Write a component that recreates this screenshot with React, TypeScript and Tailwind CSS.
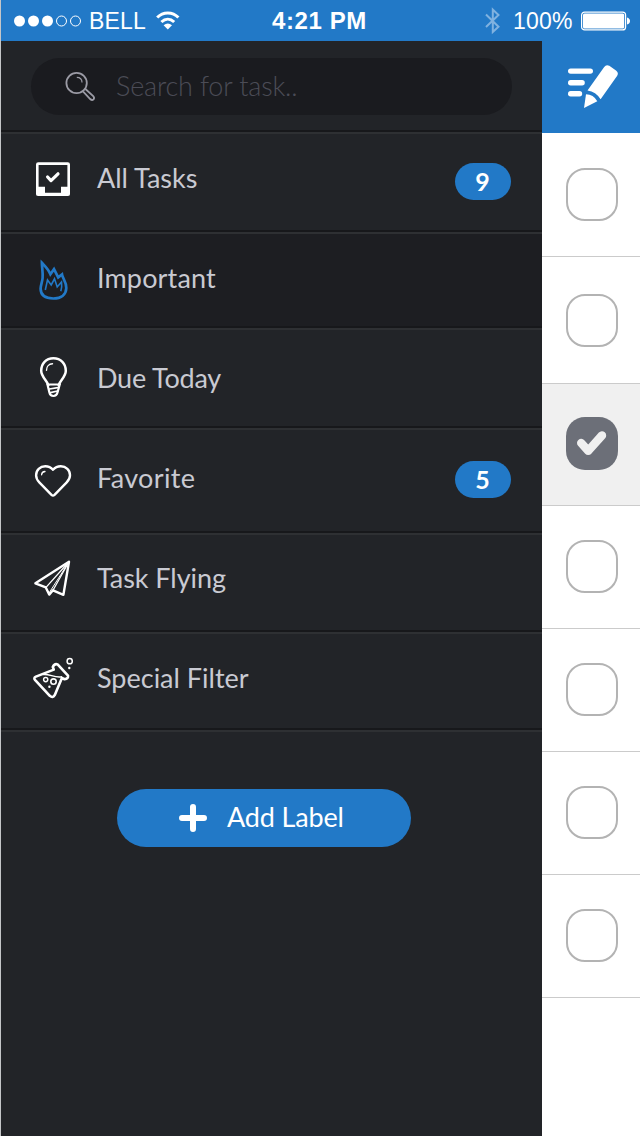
import type { ReactNode } from "react"

function InboxIcon() {
  return (
    <svg className="w-12 h-12" viewBox="0 0 48 48" fill="none" stroke="#fff">
      <rect x="8.3" y="9.6" width="31.4" height="31.2" rx="1" strokeWidth="2.6" />
      <path d="M7.5 32.8h8.5v6h16v-6h8.5v8.4h-33z" fill="#fff" stroke="none" />
      <path d="M18.6 23l3.4 3.6 7-6.8" strokeWidth="3.2" strokeLinecap="round" strokeLinejoin="round" />
    </svg>
  )
}

function FlameIcon() {
  return (
    <svg className="w-12 h-12" viewBox="0 0 48 48" fill="none" stroke="#2279c7">
      <path
        d="M12.9 8.8C16 12 19.2 15 21.4 20.2L25 15.2L29.2 23.4L33 20.4C33.6 24.5 37.4 27.5 37.3 34C37.1 41 31.8 44.5 24.4 44.5C16.5 44.5 11.7 41.5 11.6 34.8C11.6 31.5 13.3 28 13.6 24C14 18 12.9 13 12.9 8.8z"
        strokeWidth="2.7"
      />
      <path d="M16.3 36L18.5 26L22.2 31L25.5 24.8L28.2 33L32.5 28C32.8 31 33.3 33.5 31.8 37.2" strokeWidth="1.6" />
    </svg>
  )
}

function BulbIcon() {
  return (
    <svg className="w-12 h-12" viewBox="0 0 48 48" fill="none" stroke="#fff" strokeLinecap="round">
      <path d="M19.4 31.2C18 26.5 12.2 22.8 12.2 16.8C12.2 9.5 17 4.3 24.4 4.3S36.8 9.5 36.8 16.8C36.8 22.8 31 26.5 29.6 31.2" strokeWidth="2.5" />
      <path d="M18.5 30.5h12.2L28.5 38.5Q27.5 42 24.5 42Q21.2 42 20.4 38.5z" strokeWidth="2.2" />
      <path d="M20.5 35l8.2-1.4M21.5 38.6l7-1.6" strokeWidth="1.7" />
      <path d="M17.5 16.2C17.5 12.5 20 10 23.5 9.8" strokeWidth="1.4" />
    </svg>
  )
}

function HeartIcon() {
  return (
    <svg className="w-12 h-12" viewBox="0 0 48 48" fill="none" stroke="#fff" strokeLinejoin="round" strokeLinecap="round">
      <path
        d="M24 15.8C22 13.5 19.3 12.3 16.3 12.3C11 12.3 7.1 16 7.1 21.2C7.1 24.3 8.3 26.3 10.3 28.3L22.5 40.8Q24 42.2 25.5 40.8L37.7 28.3C39.7 26.3 41 24.3 41 21.2C41 16 37 12.3 31.8 12.3C28.8 12.3 26 13.5 24 15.8z"
        strokeWidth="2.4"
      />
      <path d="M12.6 20.8C12.7 19 14.2 17.6 16 17.5" strokeWidth="1.3" />
    </svg>
  )
}

function PlaneIcon() {
  return (
    <svg className="w-12 h-12" viewBox="0 0 48 48" fill="none" stroke="#fff" strokeLinejoin="round">
      <path d="M40 7.8L6.4 29.3L16.8 33.4L20.2 40.6L24 36.3L34.4 40.8z" strokeWidth="2.4" />
      <path d="M40 7.8L17 33.4M40 7.8L24 36.3" strokeWidth="1.3" />
      <path d="M40 7.8L20 39" strokeWidth="1" />
    </svg>
  )
}

function FlaskIcon() {
  return (
    <svg className="w-12 h-12" viewBox="0 0 48 48" fill="none" stroke="#fff" strokeLinejoin="round" strokeLinecap="round">
      <path
        d="M24.8 15.6L6.9 22.6Q4.2 23.9 6.2 26.2L20.8 41.8Q23.8 44.4 25.7 41.2L32.9 24L35.6 25.2Q39.6 24.6 39 21.6L28.6 10.4Q25.4 9.4 23.8 13z"
        strokeWidth="2.6"
      />
      <path d="M14.5 20.5C20 19.5 26 24.2 32.5 22.8" strokeWidth="1.5" />
      <circle cx="16.7" cy="25.6" r="2.1" strokeWidth="1.4" />
      <circle cx="24.5" cy="27.6" r="2.7" strokeWidth="1.6" />
      <circle cx="40.7" cy="7.2" r="2.6" strokeWidth="1.5" />
      <circle cx="20.4" cy="32.8" r="1.2" fill="#fff" stroke="none" />
      <circle cx="40.3" cy="14" r="1.2" fill="#fff" stroke="none" />
    </svg>
  )
}

function StatusBar() {
  return (
    <header className="flex h-[41px] items-center bg-[#2279c7] text-white">
      <svg className="ml-[12px] h-5 w-[72px]" viewBox="0 0 72 20" fill="#fff" stroke="#fff">
        <circle cx="6.5" cy="10" r="5.5" stroke="none" />
        <circle cx="20.5" cy="10" r="5.5" stroke="none" />
        <circle cx="34.5" cy="10" r="5.5" stroke="none" />
        <circle cx="48.5" cy="10" r="5" fill="none" />
        <circle cx="62.5" cy="10" r="5" fill="none" />
      </svg>
      <span className="ml-[4px] w-[58px] pt-[2px] text-[23px] leading-[41px] tracking-[0.2px]">BELL</span>
      <svg className="ml-[8px] h-[20px] w-[26px]" viewBox="0 0 26 20" fill="none" stroke="#fff" strokeWidth="3">
        <path d="M2.2 6.6C8 .4 17.6 .4 23.4 6.6" />
        <path d="M6.4 11C10.3 7.2 15.3 7.2 19.2 11" />
        <path d="M8.6 14.2Q12.8 10.8 17 14.2L12.8 18.6z" fill="#fff" stroke="none" />
      </svg>
      <span className="ml-[91px] w-[110px] whitespace-nowrap text-[24px] font-bold leading-[41px] tracking-[0.6px]">4:21 PM</span>
      <svg className="ml-[102px] h-[28px] w-[18px]" viewBox="0 0 18 28" fill="none" stroke="#80b2e0" strokeWidth="2">
        <path d="M2 7.5l12.5 12.3-5.7 5.2V2.5L14.5 8 2 20" />
      </svg>
      <span className="ml-[11px] w-[64px] pt-[2px] text-[23px] leading-[41px] tracking-[0.2px]">100%</span>
      <svg className="ml-[4px] h-[20px] w-[50px]" viewBox="0 0 50 20" fill="#fff">
        <rect x=".6" y="1.1" width="44" height="17.8" rx="3" fill="none" stroke="#fff" strokeWidth="1.2" />
        <rect x="2" y="2.5" width="41.2" height="15" rx="1.5" />
        <path d="M46 6.5Q49 7.5 49 10T46 13.5z" />
      </svg>
    </header>
  )
}

type Filter = { label: string; icon: ReactNode; row: string; text?: string; count?: number; badge?: string }

const filters: Filter[] = [
  { label: "All Tasks", icon: <InboxIcon />, row: "h-[100px] pt-[20px]", count: 9, badge: "mt-[9px]" },
  { label: "Important", icon: <FlameIcon />, row: "h-[96px] pt-[20px] bg-[#1d1e22]", text: "tracking-[0.15px]" },
  { label: "Due Today", icon: <BulbIcon />, row: "h-[100px] pt-[24px]", text: "tracking-[-0.2px]" },
  { label: "Favorite", icon: <HeartIcon />, row: "h-[105px] pt-[24px]", text: "tracking-[0.35px]", count: 5, badge: "mt-[7px]" },
  { label: "Task Flying", icon: <PlaneIcon />, row: "h-[99px] pt-[19px]", text: "tracking-[-0.05px]" },
  { label: "Special Filter", icon: <FlaskIcon />, row: "h-[98px] pt-[20px]" },
]

function Sidebar() {
  return (
    <aside className="flex w-[541px] flex-col bg-[#222428] font-['Lato',sans-serif]">
      <div className="h-[91px] border-b-2 border-[#17181b] pt-[17px]">
        <div className="ml-[30px] flex h-[57px] w-[481px] items-center rounded-full bg-[#1a1b1f]">
          <svg className="ml-[34px] h-[32px] w-[32px]" viewBox="0 0 32 32" fill="none" stroke="#9b9ba5">
            <circle cx="11.6" cy="12" r="10.2" strokeWidth="1.8" />
            <path d="M11.8 6.4C15.2 6.4 17 8.5 17 11.5" strokeWidth="1.2" />
            <path d="M18 20.4L25.2 28Q27 29.8 28.5 28.4Q29.8 27 28.2 25.2L20.4 18" strokeWidth="1.8" />
          </svg>
          <span className="ml-[19px] text-[27px] font-light tracking-[-0.18px] text-[#4b4c56]">Search for task..</span>
        </div>
      </div>

      <nav>
        {filters.map((filter) => (
          <div
            key={filter.label}
            className={`flex items-start border-t-2 border-t-[#2e3033] border-b-2 border-b-[#17181b] pl-[28px] ${filter.row}`}
          >
            {filter.icon}
            <span className={`ml-5 flex-1 text-[27px] leading-[48px] text-[#c9cad2] ${filter.text ?? ""}`}>{filter.label}</span>
            {filter.count && (
              <span
                className={`mr-[31px] h-[37px] w-[56px] rounded-full bg-[#2279c7] pr-px text-center text-[25px] font-bold leading-[37px] text-white ${filter.badge}`}
              >
                {filter.count}
              </span>
            )}
          </div>
        ))}
      </nav>

      <div className="flex-1 border-t-2 border-[#2e3033] pt-[57px]">
        <button className="ml-[116px] flex h-[58px] w-[294px] items-center rounded-full bg-[#2279c7] text-[27px] text-white">
          <svg className="ml-[62px] h-[28px] w-[28px]" viewBox="0 0 28 28" stroke="#fff" strokeWidth="6" strokeLinecap="round">
            <path d="M14 3v22M3 14h22" />
          </svg>
          <span className="ml-5 pb-[2px] tracking-[-0.15px]">Add Label</span>
        </button>
      </div>
    </aside>
  )
}

const tasks = [
  { row: "h-[124px] pt-[35px]", done: false },
  { row: "h-[127px] pt-[37px]", done: false },
  { row: "h-[122px] pt-[33px] bg-[#f0f0f0]", done: true },
  { row: "h-[123px] pt-[34px]", done: false },
  { row: "h-[123px] pt-[34px]", done: false },
  { row: "h-[123px] pt-[34px]", done: false },
  { row: "h-[123px] pt-[34px]", done: false },
]

function TaskColumn() {
  return (
    <main className="w-[98px] bg-white">
      <div className="flex h-[92px] bg-[#2279c7]">
        <svg className="ml-[24px] mt-[22px] h-[48px] w-[54px]" viewBox="0 0 54 48" fill="#fff">
          <rect x="2" y="5.4" width="25" height="5.4" rx="2.7" />
          <rect x="2" y="17" width="16.8" height="5.4" rx="2.7" />
          <rect x="2" y="28" width="14.2" height="5.4" rx="2.7" />
          <path d="M38.2 4Q40.2 1 43.3 2.8L50 7.5Q53 9.8 51.2 12.8L34.6 36.3Q30 28.5 21.5 27.4z" />
          <path d="M20 31.2Q27.5 31.3 31.3 38.3L18 45z" />
        </svg>
      </div>
      {tasks.map((task, index) => (
        <div key={index} className={`border-b border-[#cbcbcb] pl-[24px] ${task.row}`}>
          {task.done ? (
            <div className="h-[53px] w-[52px] rounded-[19px] bg-[#6c6f78]">
              <svg className="h-[53px] w-[52px]" viewBox="0 0 52 53" fill="none" stroke="#f0f0f0" strokeWidth="8.4">
                <path d="M15.2 26l7.1 7.8L36 18.4" strokeLinecap="round" strokeLinejoin="round" />
              </svg>
            </div>
          ) : (
            <div className="h-[53px] w-[52px] rounded-[19px] border-2 border-[#b3b3b3]" />
          )}
        </div>
      ))}
    </main>
  )
}

export default function App() {
  return (
    <div className="h-[1136px] w-[640px] overflow-hidden border-l border-[#c4c6c8] font-['Liberation_Sans',sans-serif]">
      <StatusBar />
      <div className="flex h-[1095px]">
        <Sidebar />
        <TaskColumn />
      </div>
    </div>
  )
}
